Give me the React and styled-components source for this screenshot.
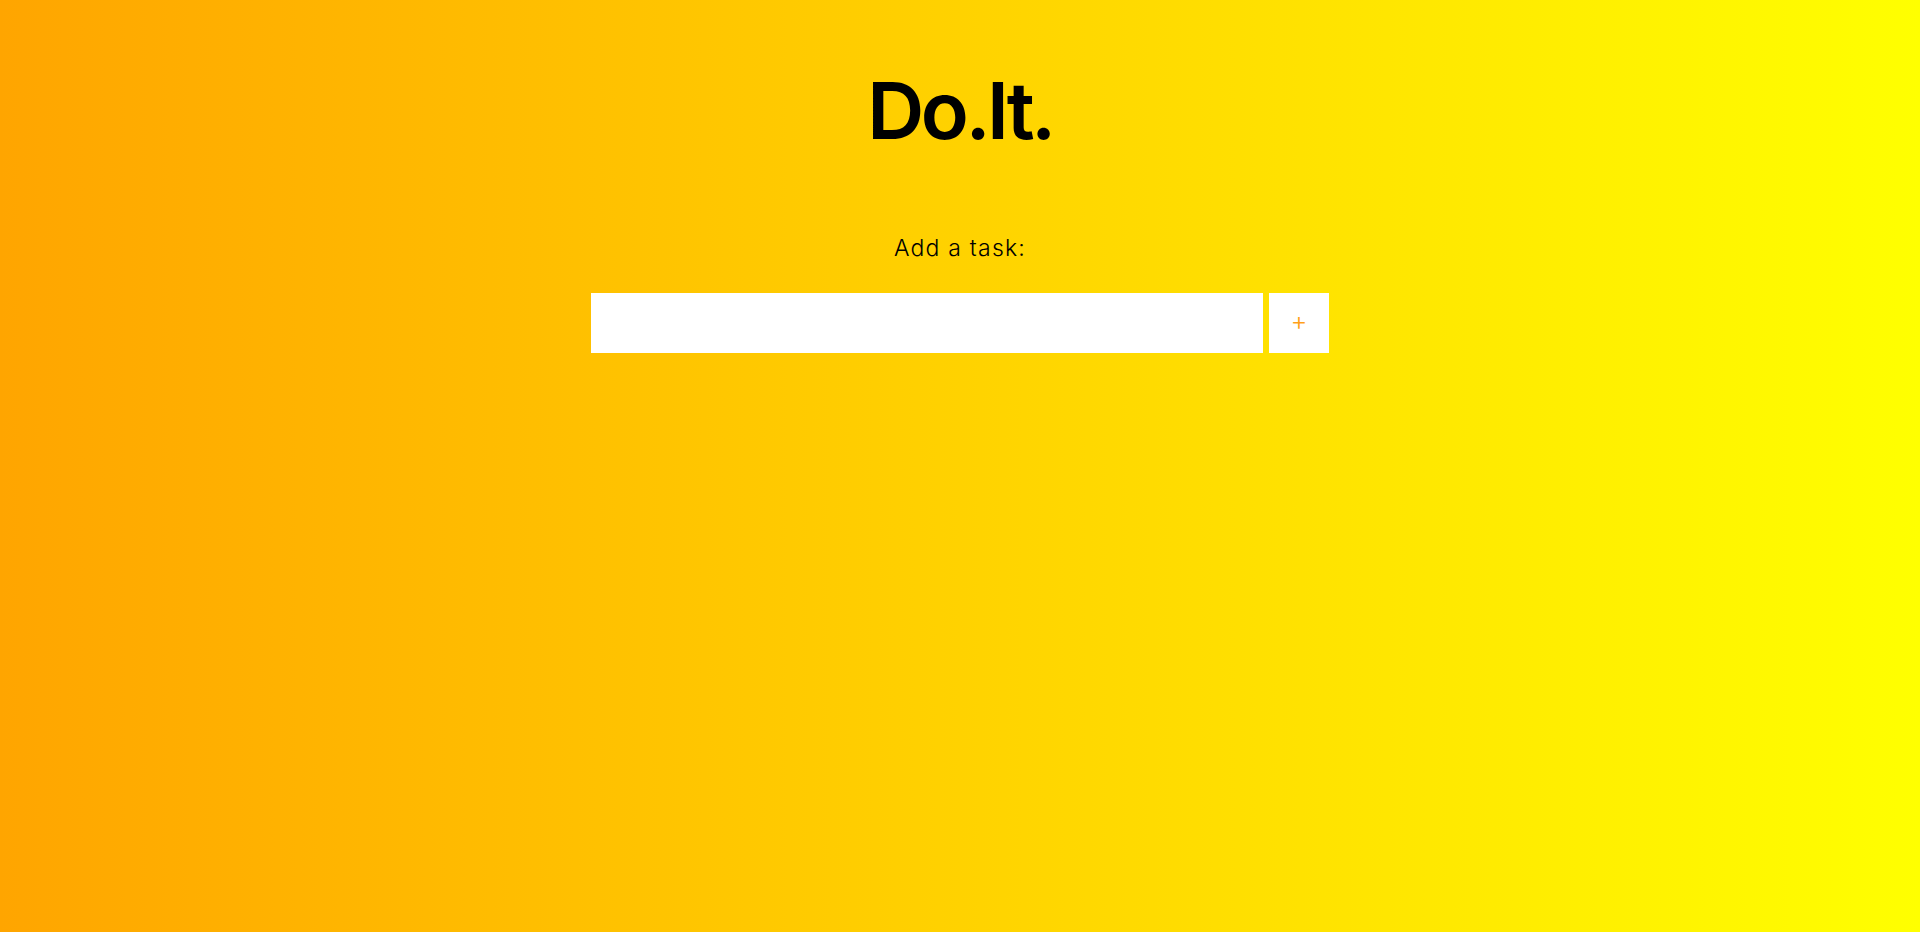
import React, { useState } from "react";
import styled, { createGlobalStyle } from "styled-components";

const Global = createGlobalStyle`
  html, body { margin: 0; padding: 0; height: 100%; }
  body {
    font-family: Inter, "Noto Sans", sans-serif;
    background: linear-gradient(to right, #ffa500, #ffff00);
    min-height: 932px;
  }
  #root { min-height: 932px; }
`;

const Page = styled.main`
  display: flex;
  flex-direction: column;
  align-items: center;
  min-height: 932px;
  padding-top: 71px;
  box-sizing: border-box;
`;

const Title = styled.h1`
  margin: 0;
  font-family: Inter, sans-serif;
  font-weight: 600;
  font-size: 79px;
  line-height: 1;
  letter-spacing: -3.5px;
  color: #000;
`;

const Label = styled.label`
  margin-top: 85px;
  font-family: Inter, sans-serif;
  font-weight: 300;
  font-size: 23px;
  line-height: 26px;
  letter-spacing: 1.2px;
  color: #000;
`;

const Row = styled.form`
  display: flex;
  gap: 6px;
  margin-top: 32px;
`;

const Input = styled.input`
  width: 672px;
  height: 60px;
  box-sizing: border-box;
  border: none;
  outline: none;
  background: #fff;
  padding: 0 16px;
  font-family: Inter, sans-serif;
  font-size: 18px;
`;

const AddButton = styled.button`
  width: 60px;
  height: 60px;
  border: none;
  background: #fff;
  color: #ff9f1a;
  font-family: Inter, sans-serif;
  font-weight: 300;
  font-size: 26px;
  line-height: 1;
  padding: 0 0 4px;
  cursor: pointer;
  display: flex;
  align-items: center;
  justify-content: center;
`;

export default function App() {
  const [value, setValue] = useState("");
  return (
    <>
      <Global />
      <Page>
        <Title>Do.It.</Title>
        <Label htmlFor="task">Add a task:</Label>
        <Row onSubmit={(e) => e.preventDefault()}>
          <Input id="task" value={value} onChange={(e) => setValue(e.target.value)} />
          <AddButton type="submit">+</AddButton>
        </Row>
      </Page>
    </>
  );
}
